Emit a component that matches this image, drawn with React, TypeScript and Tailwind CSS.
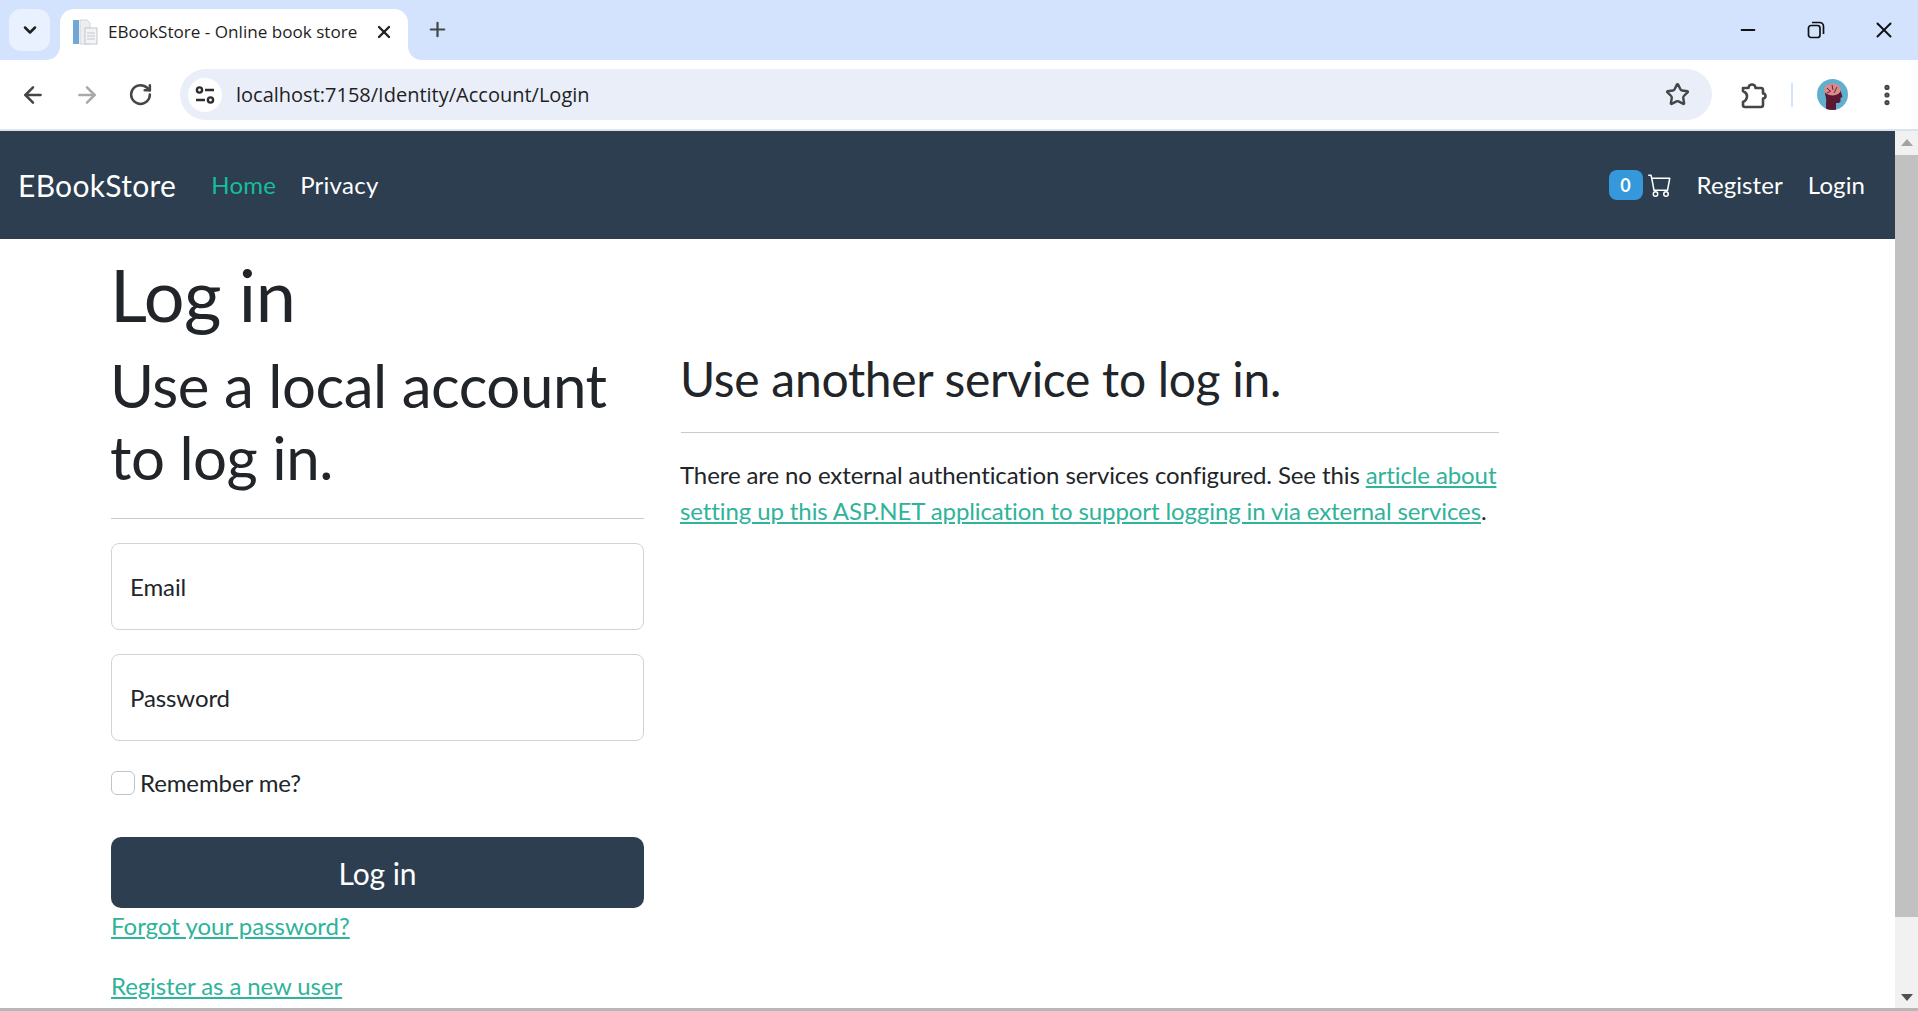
import React from 'react';
import { ArrowLeft, ArrowRight, ChevronDown, EllipsisVertical, Minus, Plus, RotateCw, Star, X } from 'lucide-react';
import { BsCart } from 'react-icons/bs';

const Favicon = () => (
  <svg width="26" height="28" viewBox="0 0 26 28" fill="none">
    <rect x="1" y="2" width="6" height="24" fill="#6fa8d6" />
    <path d="M8 2h7l3 3v21H8z" fill="#eceef1" stroke="#c9cdd3" strokeWidth="0.8" />
    <rect x="13" y="10" width="12" height="16" fill="#f3f4f6" stroke="#b4b9c0" strokeWidth="0.8" />
    <path d="M15 15h8M15 18h8M15 21h8" stroke="#c2c6cc" strokeWidth="1" />
  </svg>
);

const SiteInfo = () => (
  <svg width="24" height="24" viewBox="0 0 24 24" fill="none" stroke="#2b2d2f" strokeWidth="2.4">
    <circle cx="6.5" cy="7" r="2.6" />
    <path d="M12 7h9M3 17h9" />
    <circle cx="17.5" cy="17" r="2.6" />
  </svg>
);

const Extensions = () => (
  <svg width="30" height="30" viewBox="0 0 30 30" fill="none" stroke="#444746" strokeWidth="2.6" strokeLinejoin="round">
    <path d="M5 8h5.500a3.500 3.500 0 0 1 7 0H23a2 2 0 0 1 2 2v3.500a2.500 2.500 0 0 1 0 5V25a2 2 0 0 1-2 2H7a2 2 0 0 1-2-2v-3c2.500-1 4-3 4-6s-2-4-4-5z" />
  </svg>
);

const Restore = () => (
  <svg width="18" height="18" viewBox="0 0 18 18" fill="none" stroke="#111" strokeWidth="1.700">
    <rect x="1.500" y="4.500" width="11.500" height="12" rx="2.500" />
    <path d="M5 1.500h7.500a4 4 0 0 1 4 4V13" />
  </svg>
);

const Avatar = () => (
  <svg width="31" height="31" viewBox="0 0 31 31">
    <clipPath id="avatar-clip"><circle cx="15.500" cy="15.500" r="15.500" /></clipPath>
    <g clipPath="url(#avatar-clip)">
      <rect width="31" height="31" fill="#5fb0cf" />
      <path d="M8 13C8 6 23 5 24 13l1.500 5-2 1v3c0 2-2.500 2-4.500 2v7H9v-7c1-4-1-7-1-11z" fill="#5c1733" />
      <ellipse cx="15.500" cy="10.500" rx="8.500" ry="6" fill="#d98b8b" />
      <path d="M10 9l3 3m2-6l1 5m4-3l-3 6m-7 0l4-2" stroke="#5c1733" strokeWidth="0.900" />
    </g>
  </svg>
);

const Corner = ({ side }: { side: 'left' | 'right' }) => (
  <svg
    width="14"
    height="14"
    viewBox="0 0 14 14"
    className={side === 'left' ? 'absolute bottom-0 -left-[14px]' : 'absolute bottom-0 -right-[14px]'}
  >
    <path d={side === 'left' ? 'M14 0v14H0C8 14 14 8 14 0z' : 'M0 0v14h14C6 14 0 8 0 0z'} fill="#fff" />
  </svg>
);

const linkClass = 'text-[#2fb39a] underline';

export default function App() {
  return (
    <div className="flex h-screen w-full flex-col overflow-hidden bg-white font-['Lato',sans-serif] text-[24px] leading-[36px] tracking-[-0.1px] text-[#212529]">
      {/* Tab strip */}
      <div className="flex h-[60px] shrink-0 bg-[#d3e3fd] tracking-normal">
        <div className="mt-[9px] ml-[9px] flex h-[42px] w-[41px] items-center justify-center rounded-xl bg-[#eaf1fe]">
          <ChevronDown size={20} strokeWidth={3} color="#1f1f1f" />
        </div>
        <div className="relative mt-[9px] ml-[10px] flex h-[51px] w-[348px] items-center rounded-t-[14px] bg-white pb-[5px] pl-[12px] font-['Open_Sans',sans-serif] text-[17.100px] text-[#1f1f1f]">
          <Corner side="left" />
          <Favicon />
          <span className="ml-[10px]">EBookStore - Online book store</span>
          <X className="ml-auto mr-[14px]" size={20} strokeWidth={2.800} color="#1f1f1f" />
          <Corner side="right" />
        </div>
        <div className="ml-[18px] flex items-center pb-[2px]">
          <Plus size={23} strokeWidth={2.300} color="#444746" />
        </div>
        <div className="ml-auto flex w-[180px] items-center pb-[1px]">
          <Minus className="-ml-[1px]" size={22} strokeWidth={2} color="#111" />
          <div className="ml-[48px]"><Restore /></div>
          <X className="ml-[46px]" size={26} strokeWidth={1.800} color="#111" />
        </div>
      </div>

      {/* Toolbar */}
      <div className="flex h-[69px] shrink-0 items-center rounded-t-xl bg-white tracking-normal">
        <div className="flex w-[180px] items-center pl-[20px]">
          <ArrowLeft size={26} strokeWidth={2.300} color="#444746" />
          <ArrowRight className="ml-[28px]" size={26} strokeWidth={2.300} color="#a8a9aa" />
          <RotateCw className="ml-[28px]" size={25} strokeWidth={2.400} color="#444746" />
        </div>
        <div className="flex h-[51px] w-[1532px] items-center rounded-full bg-[#e9eef8] pl-[8px] pr-[22px]">
          <div className="flex h-[34px] w-[34px] items-center justify-center rounded-full bg-white">
            <SiteInfo />
          </div>
          <span className="ml-[14px] font-['Open_Sans',sans-serif] text-[20px] text-[#1f1f1f]">
            localhost:7158/Identity/Account/Login
          </span>
          <Star className="ml-auto" size={25} strokeWidth={2.300} color="#444746" />
        </div>
        <div className="ml-[26px]"><Extensions /></div>
        <div className="ml-[23px] h-[24px] w-[2px] bg-[#d3e3fd]" />
        <div className="ml-[24px]"><Avatar /></div>
        <EllipsisVertical className="ml-[26px]" size={26} strokeWidth={2.800} color="#444746" />
      </div>
      <div className="h-[2px] shrink-0 bg-[#dde3ea]" />

      {/* Page */}
      <div className="flex min-h-0 flex-1">
        <div className="min-w-0 flex-1 overflow-hidden">
          <nav className="flex h-[108px] items-center bg-[#2c3e50] pl-[18px] pr-[30px] tracking-[0.25px] text-white">
            <a className="text-[30px] tracking-[0.3px]">EBookStore</a>
            <a className="ml-[35px] text-[#18bc9c]">Home</a>
            <a className="ml-[24px]">Privacy</a>
            <span className="ml-auto flex h-[30px] w-[34px] items-center justify-center rounded-lg bg-[#3498db] text-[18px] font-bold">0</span>
            <BsCart className="ml-[5px]" size={24} />
            <a className="ml-[25px] tracking-[0.1px]">Register</a>
            <a className="ml-[25px] tracking-[0.1px]">Login</a>
          </nav>

          <main className="pl-[111px]">
            <h1 className="-ml-[1px] pt-[12px] text-[72px] leading-[86.400px] tracking-[-0.5px]">Log in</h1>
            <div className="mt-[12px] flex gap-[37px]">
              <section className="w-[533px] shrink-0">
                <h2 className="-ml-[1px] text-[60px] leading-[72px] tracking-[-0.45px]">Use a local account to log in.</h2>
                <hr className="mt-[25px] mb-[24px] border-[#c8cacc]" />
                <div className="mb-[24px] flex h-[87px] items-center rounded-lg border border-[#ced4da] pl-[18px]">Email</div>
                <div className="mb-[24px] flex h-[87px] items-center rounded-lg border border-[#ced4da] pl-[18px]">Password</div>
                <div className="mb-[36px] flex h-[36px] items-center">
                  <span className="h-[24px] w-[24px] rounded-md border border-[#bfc4c9] bg-white" />
                  <span className="ml-[5px]">Remember me?</span>
                </div>
                <button className="flex h-[71px] w-full items-center justify-center rounded-[10px] bg-[#2c3e50] text-[30px] text-white">Log in</button>
                <p className="mb-[24px] tracking-normal"><a className={linkClass}>Forgot your password?</a></p>
                <p><a className={linkClass}>Register as a new user</a></p>
              </section>
              <section className="w-[818px] shrink-0">
                <h3 className="mt-[1px] -ml-[1px] text-[48px] leading-[57.600px] tracking-[-0.3px]">Use another service to log in.</h3>
                <hr className="my-[24px] border-[#c8cacc]" />
                <p className="-ml-[1px]">
                  There are no external authentication services configured. See this{' '}
                  <a className={linkClass}>article about setting up this ASP.NET application to support logging in via external services</a>.
                </p>
              </section>
            </div>
          </main>
        </div>

        {/* Scrollbar */}
        <div className="flex w-[23px] shrink-0 flex-col items-center bg-[#f1f1f1]">
          <div className="mt-[8px] h-0 w-0 border-x-[6px] border-b-[7px] border-x-transparent border-b-[#a3a3a3]" />
          <div className="mt-[9px] h-[762px] w-full bg-[#c1c1c1]" />
          <div className="mt-auto mb-[7px] h-0 w-0 border-x-[6px] border-t-[7px] border-x-transparent border-t-[#505050]" />
        </div>
      </div>
      <div className="h-[3px] shrink-0 bg-[#b6b8b5]" />
    </div>
  );
}
